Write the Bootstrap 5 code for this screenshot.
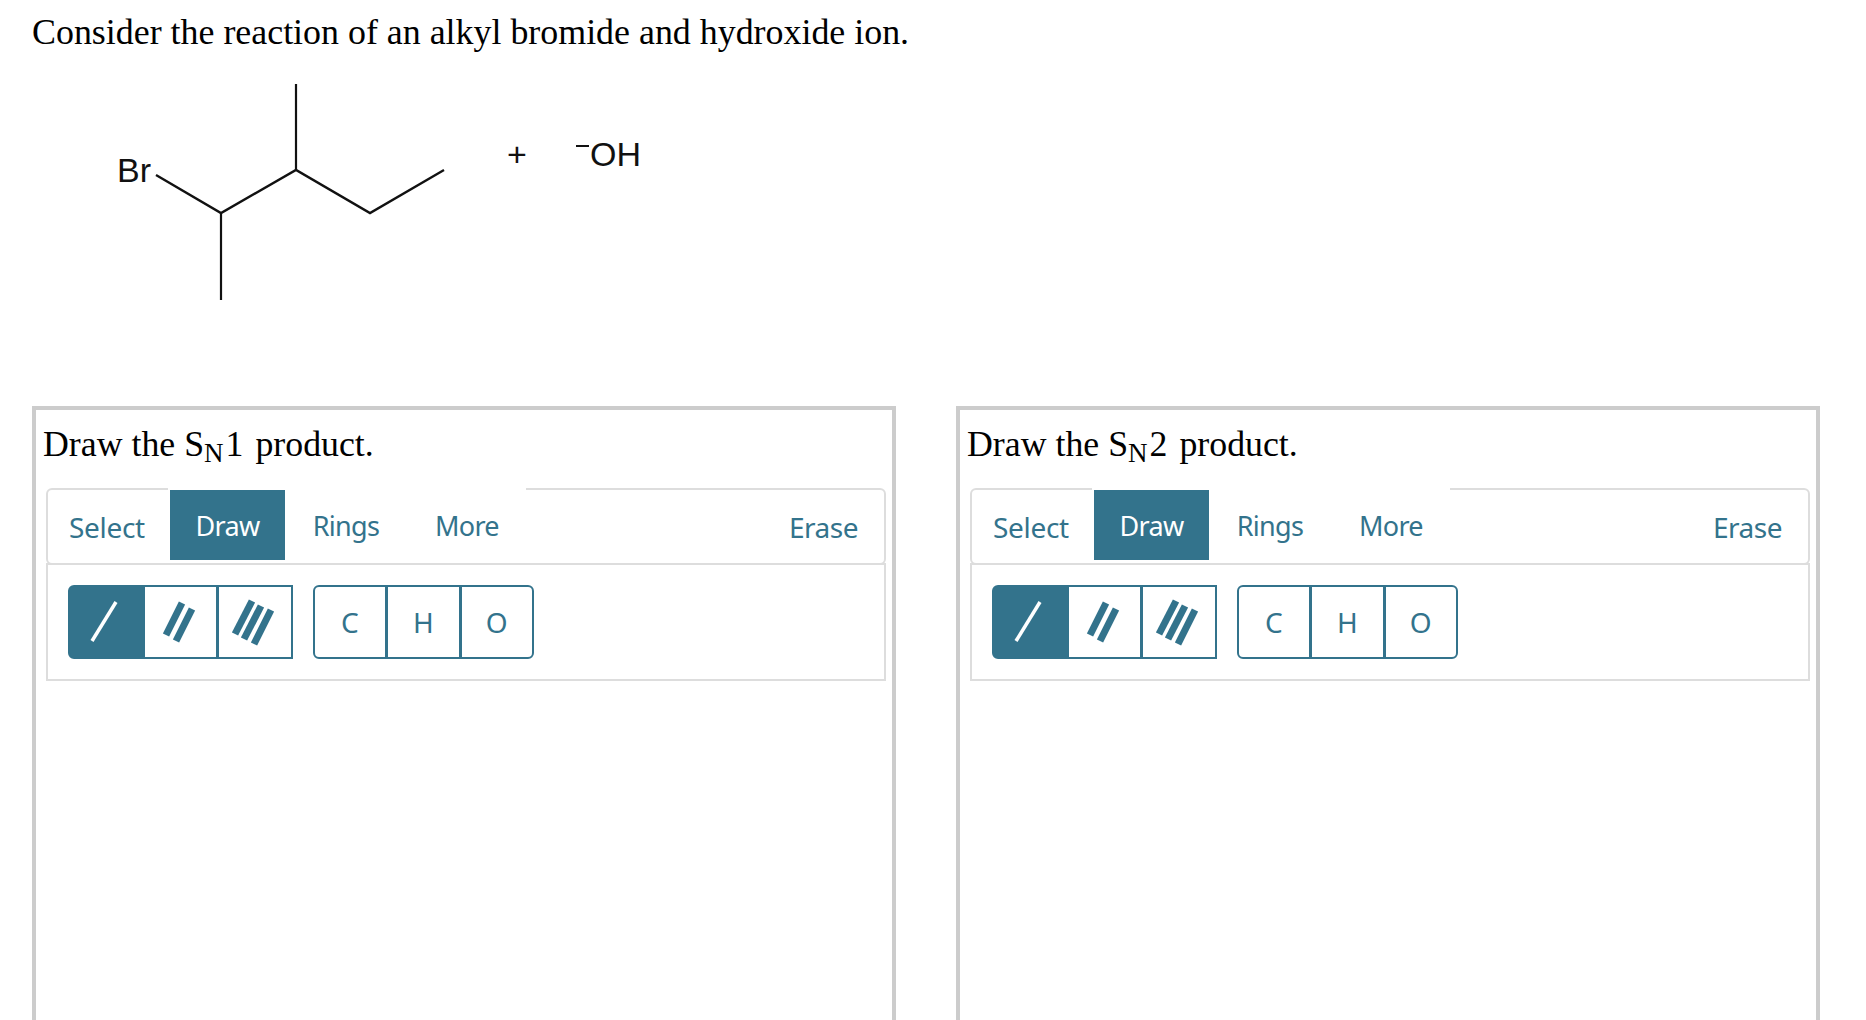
<!DOCTYPE html>
<html lang="en">
<head>
    <meta charset="UTF-8">
    <meta name="viewport" content="width=device-width, initial-scale=1.0">
    <title>SN1 and SN2 products</title>
    <link href="https://cdn.jsdelivr.net/npm/bootstrap@5.3.0/dist/css/bootstrap.min.css" rel="stylesheet">
    <style>
        html, body { height: 100%; overflow: hidden; }
        body { background: #fff; color: #000; font-family: "Liberation Serif", serif; padding: 0 32px; }
        .question-text { font-size: 35.9px; line-height: 40px; padding-top: 12px; margin: 0; white-space: nowrap; }
        .molecule { display: block; margin-left: -32px; width: 700px; height: 354px; }
        .molecule text { font-family: "Liberation Sans", sans-serif; font-size: 34px; fill: #111; }
        .panels { gap: 60px; }
        .draw-panel { width: 864px; height: 760px; border: 4px solid #ccc; padding: 0 6px 0 6px; flex: none; }
        .draw-title { font-size: 35.8px; line-height: 40px; margin: 14px 0 24px 1px; white-space: nowrap; }
        .draw-title sub { font-size: 27px; bottom: -6px; line-height: 0; margin-right: 2px; }
        .draw-title .gap { margin-left: 3px; }
        .tool-bar { margin-left: 4px; height: 77px; border: 2px solid #ddd; border-radius: 6px; font-family: "Noto Sans", sans-serif; font-size: 27px; letter-spacing: -.7px; }
        .tool-link { color: #33738c; text-decoration: none; line-height: 36px; display: block; }
        .tool-edge { padding: 19px 0 0 21px; width: 120px; font-size: 28px; letter-spacing: -.3px; }
        .tool-tabs { background: #fff; margin-top: -2px; padding-top: 2px; height: 73px; width: 358px; }
        .tool-tabs .tool-link { height: 70px; padding-top: 18px; text-align: center; }
        .tool-tabs li:nth-child(1) .tool-link { width: 115px; margin-left: 2px; background: #33738c; color: #fff; }
        .tool-tabs li:nth-child(2) .tool-link { width: 68px; margin-left: 27px; }
        .tool-tabs li:nth-child(3) .tool-link { width: 61px; margin-left: 55px; }
        .tool-erase { padding: 19px 26px 0 0; font-size: 28px; letter-spacing: -.5px; }
        .tool-rows { margin-left: 4px; height: 118px; margin-top: -2px; border: 2px solid #ddd; padding: 20px; gap: 20px; }
        .bond-group .btn { width: 74.5px; height: 74px; padding: 0; border: 2px solid #33738c; color: #33738c; background: #fff; border-radius: 6px; font-family: "Noto Sans", sans-serif; font-size: 28px; display: flex; align-items: center; justify-content: center; }
        .bond-kinds .btn { width: 75.5px; }
        .bond-kinds .btn:last-child { border-radius: 0; }
        .bond-kinds .btn svg { margin-left: -3px; }
        .bond-group .btn.is-on { background: #33738c; color: #fff; }
        .bond-group .btn svg { display: block; }
    </style>
</head>
<body>
    <p class="question-text">Consider the reaction of an alkyl bromide and hydroxide ion.</p>
    <svg class="molecule" viewBox="0 52 700 354">
        <polyline points="156,175 221,213 296,170 370,213 444,170" fill="none" stroke="#111" stroke-width="2.4"/>
        <line x1="296" y1="84" x2="296" y2="170" stroke="#111" stroke-width="2.2"/>
        <line x1="221" y1="213" x2="221" y2="300" stroke="#111" stroke-width="2.2"/>
        <text x="117" y="182">Br</text>
        <text x="507" y="166">+</text>
        <line x1="576" y1="146" x2="589" y2="146" stroke="#111" stroke-width="2"/>
        <text x="590" y="166">OH</text>
    </svg>
    <div class="panels d-flex">
        <div class="draw-panel">
            <p class="draw-title">Draw the S<sub>N</sub>1 <span class="gap">product.</span></p>
            <div class="tool-bar d-flex align-items-start">
                <a class="tool-link tool-edge" href="#">Select</a>
                <ul class="tool-tabs nav">
                    <li><a class="tool-link" href="#">Draw</a></li>
                    <li><a class="tool-link" href="#">Rings</a></li>
                    <li><a class="tool-link" href="#">More</a></li>
                </ul>
                <a class="tool-link tool-erase ms-auto" href="#">Erase</a>
            </div>
            <div class="tool-rows d-flex">
                <div class="btn-group bond-group bond-kinds">
                    <button class="btn is-on" type="button"><svg width="30" height="44" viewBox="0 0 30 44"><line x1="3" y1="41" x2="27" y2="2" stroke="#fff" stroke-width="3.5"/></svg></button>
                    <button class="btn" type="button"><svg width="34" height="44" viewBox="0 0 34 44"><g stroke="#33738c" stroke-width="7"><line x1="4" y1="35" x2="20" y2="3"/><line x1="14" y1="41" x2="30" y2="9"/></g></svg></button>
                    <button class="btn" type="button"><svg width="42" height="48" viewBox="0 0 42 48"><g stroke="#33738c" stroke-width="7"><line x1="3" y1="36" x2="20" y2="3"/><line x1="12" y1="41" x2="29" y2="8"/><line x1="22" y1="46" x2="39" y2="12"/></g></svg></button>
                </div>
                <div class="btn-group bond-group">
                    <button class="btn" type="button">C</button>
                    <button class="btn" type="button">H</button>
                    <button class="btn" type="button">O</button>
                </div>
            </div>
        </div>
        <div class="draw-panel">
            <p class="draw-title">Draw the S<sub>N</sub>2 <span class="gap">product.</span></p>
            <div class="tool-bar d-flex align-items-start">
                <a class="tool-link tool-edge" href="#">Select</a>
                <ul class="tool-tabs nav">
                    <li><a class="tool-link" href="#">Draw</a></li>
                    <li><a class="tool-link" href="#">Rings</a></li>
                    <li><a class="tool-link" href="#">More</a></li>
                </ul>
                <a class="tool-link tool-erase ms-auto" href="#">Erase</a>
            </div>
            <div class="tool-rows d-flex">
                <div class="btn-group bond-group bond-kinds">
                    <button class="btn is-on" type="button"><svg width="30" height="44" viewBox="0 0 30 44"><line x1="3" y1="41" x2="27" y2="2" stroke="#fff" stroke-width="3.5"/></svg></button>
                    <button class="btn" type="button"><svg width="34" height="44" viewBox="0 0 34 44"><g stroke="#33738c" stroke-width="7"><line x1="4" y1="35" x2="20" y2="3"/><line x1="14" y1="41" x2="30" y2="9"/></g></svg></button>
                    <button class="btn" type="button"><svg width="42" height="48" viewBox="0 0 42 48"><g stroke="#33738c" stroke-width="7"><line x1="3" y1="36" x2="20" y2="3"/><line x1="12" y1="41" x2="29" y2="8"/><line x1="22" y1="46" x2="39" y2="12"/></g></svg></button>
                </div>
                <div class="btn-group bond-group">
                    <button class="btn" type="button">C</button>
                    <button class="btn" type="button">H</button>
                    <button class="btn" type="button">O</button>
                </div>
            </div>
        </div>
    </div>
    <script src="https://cdn.jsdelivr.net/npm/bootstrap@5.3.0/dist/js/bootstrap.bundle.min.js"></script>
</body>
</html>
